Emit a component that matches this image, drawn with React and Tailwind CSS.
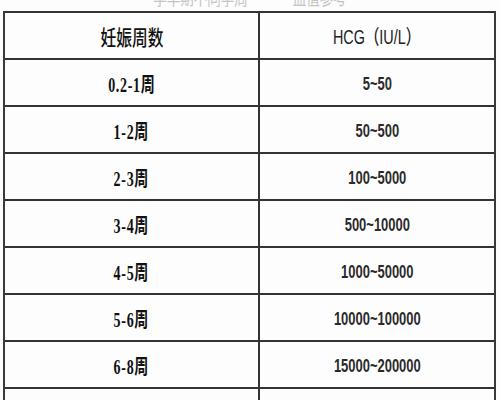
import React from "react";

const rows = [
  ["0.2-1周", "5~50"],
  ["1-2周", "50~500"],
  ["2-3周", "100~5000"],
  ["3-4周", "500~10000"],
  ["4-5周", "1000~50000"],
  ["5-6周", "10000~100000"],
  ["6-8周", "15000~200000"],
  ["8-12周", "10000~100000"],
];

export default function App() {
  return (
    <div className="w-[500px] h-[400px] overflow-hidden bg-[#fdfdfd]">
      <div className="h-[11px] overflow-hidden flex justify-center">
        <div
          className="-mt-[12px] flex gap-[60px] text-[18px] leading-[18px] text-[#c4c4c4] scale-x-75"
          style={{ fontFamily: '"Noto Sans CJK SC", sans-serif' }}
        >
          <span>孕早期不同孕周</span>
          <span>血值参考</span>
        </div>
      </div>
      <div className="ml-[3px] w-[493px] border-x-2 border-[#3a3a3a]">
        <div className="grid grid-cols-[255px_1fr] h-[47px] border-t-2 border-[#333]">
          <div className="border-r-2 border-[#333] flex items-center justify-center">
            <span
              className="inline-block scale-x-75 text-[21px] font-medium text-[#111] pt-[2px]"
              style={{ fontFamily: '"Noto Sans CJK SC", sans-serif' }}
            >
              妊娠周数
            </span>
          </div>
          <div className="flex items-center justify-center">
            <span
              className="inline-block scale-x-[0.72] text-[20px] font-medium text-[#222] pt-[2px]"
              style={{ fontFamily: '"Liberation Sans", "Noto Sans CJK SC", sans-serif' }}
            >
              HCG（IU/L）
            </span>
          </div>
        </div>
        {rows.map(([w, v]) => (
          <div
            key={w}
            className="grid grid-cols-[255px_1fr] h-[47px] border-t-2 border-[#333]"
          >
            <div className="border-r-2 border-[#333] flex items-center justify-center">
              <span
                className="inline-block scale-x-[0.7] text-[20px] font-semibold tracking-[1px] text-[#111] pt-[5px]"
                style={{ fontFamily: '"Liberation Serif", "Noto Sans CJK SC", serif' }}
              >
                {w}
              </span>
            </div>
            <div className="flex items-center justify-center">
              <span
                className="inline-block scale-x-[0.72] text-[18px] font-bold text-[#2a2a2a] pt-[3px]"
                style={{ fontFamily: '"Liberation Sans", sans-serif' }}
              >
                {v}
              </span>
            </div>
          </div>
        ))}
      </div>
    </div>
  );
}
